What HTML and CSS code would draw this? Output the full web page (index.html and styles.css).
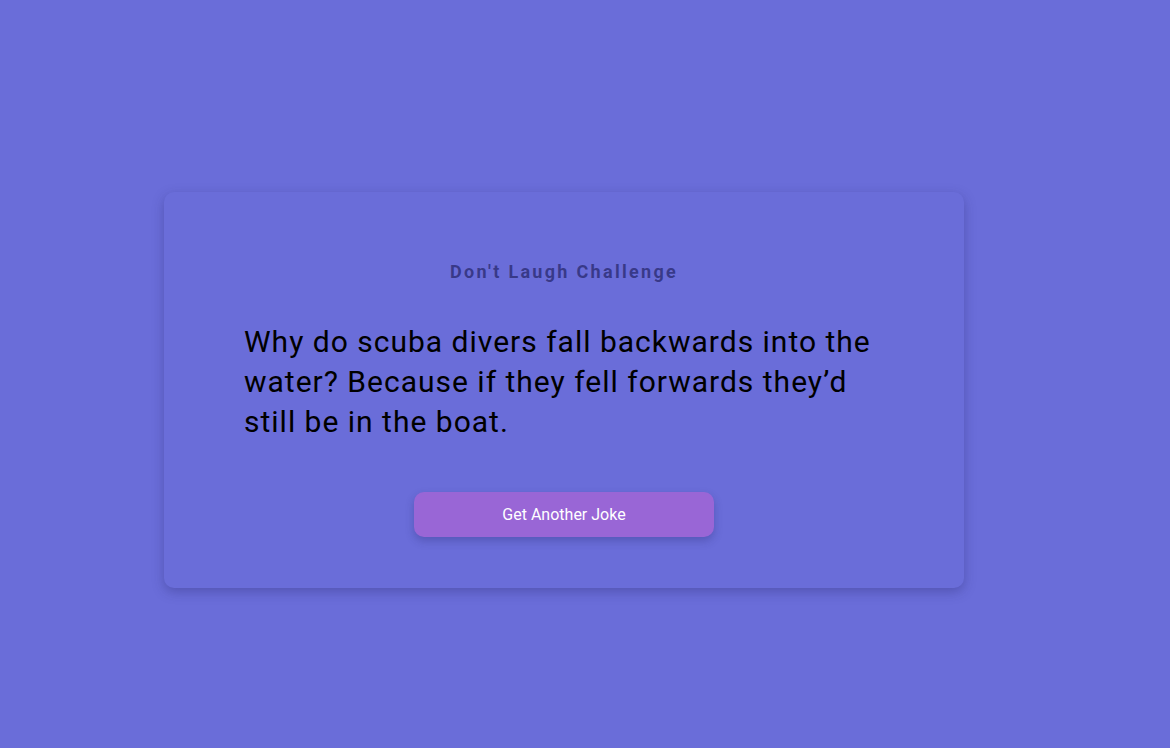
FILE: index.html
```html
<!DOCTYPE html>
<html>
<head>
<meta charset="utf-8">
<link rel="stylesheet" href="styles.css">
</head>
<body>
<main class="page">
  <section class="card">
    <h1 class="title">Don't Laugh Challenge</h1>
    <p class="joke">Why do scuba divers fall backwards into the water? Because if they fell forwards they’d still be in the boat.</p>
    <div class="actions">
      <button class="btn">Get Another Joke</button>
    </div>
  </section>
</main>
</body>
</html>
```
FILE: styles.css
```css
html, body {
  margin: 0;
  padding: 0;
  height: 100%;
  background: #6a6dd9;
  font-family: Roboto, "Liberation Sans", sans-serif;
}
.page {
  display: flex;
  justify-content: center;
  align-items: flex-start;
  padding: 192px 42px 0 0;
  box-sizing: border-box;
  min-height: 100%;
}
.card {
  width: 800px;
  box-sizing: border-box;
  padding: 70px 80px 51px;
  background: #6a6dd9;
  border-radius: 10px;
  box-shadow: 0 4px 12px rgba(40, 40, 110, 0.35);
}
.title {
  margin: 0;
  text-align: center;
  font-size: 18px;
  line-height: 20px;
  font-weight: 700;
  letter-spacing: 2.3px;
  color: rgba(40, 40, 110, 0.75);
}
.joke {
  margin: 40px 0 50px;
  font-size: 30px;
  line-height: 40px;
  letter-spacing: 1px;
  color: #000;
}
.actions {
  display: flex;
  justify-content: center;
}
.btn {
  width: 300px;
  height: 45px;
  border: none;
  border-radius: 10px;
  background: #9966d6;
  color: #fff;
  font-family: Roboto, "Liberation Sans", sans-serif;
  font-size: 16px;
  box-shadow: 0 4px 8px rgba(40, 40, 110, 0.3);
  cursor: pointer;
}
```
